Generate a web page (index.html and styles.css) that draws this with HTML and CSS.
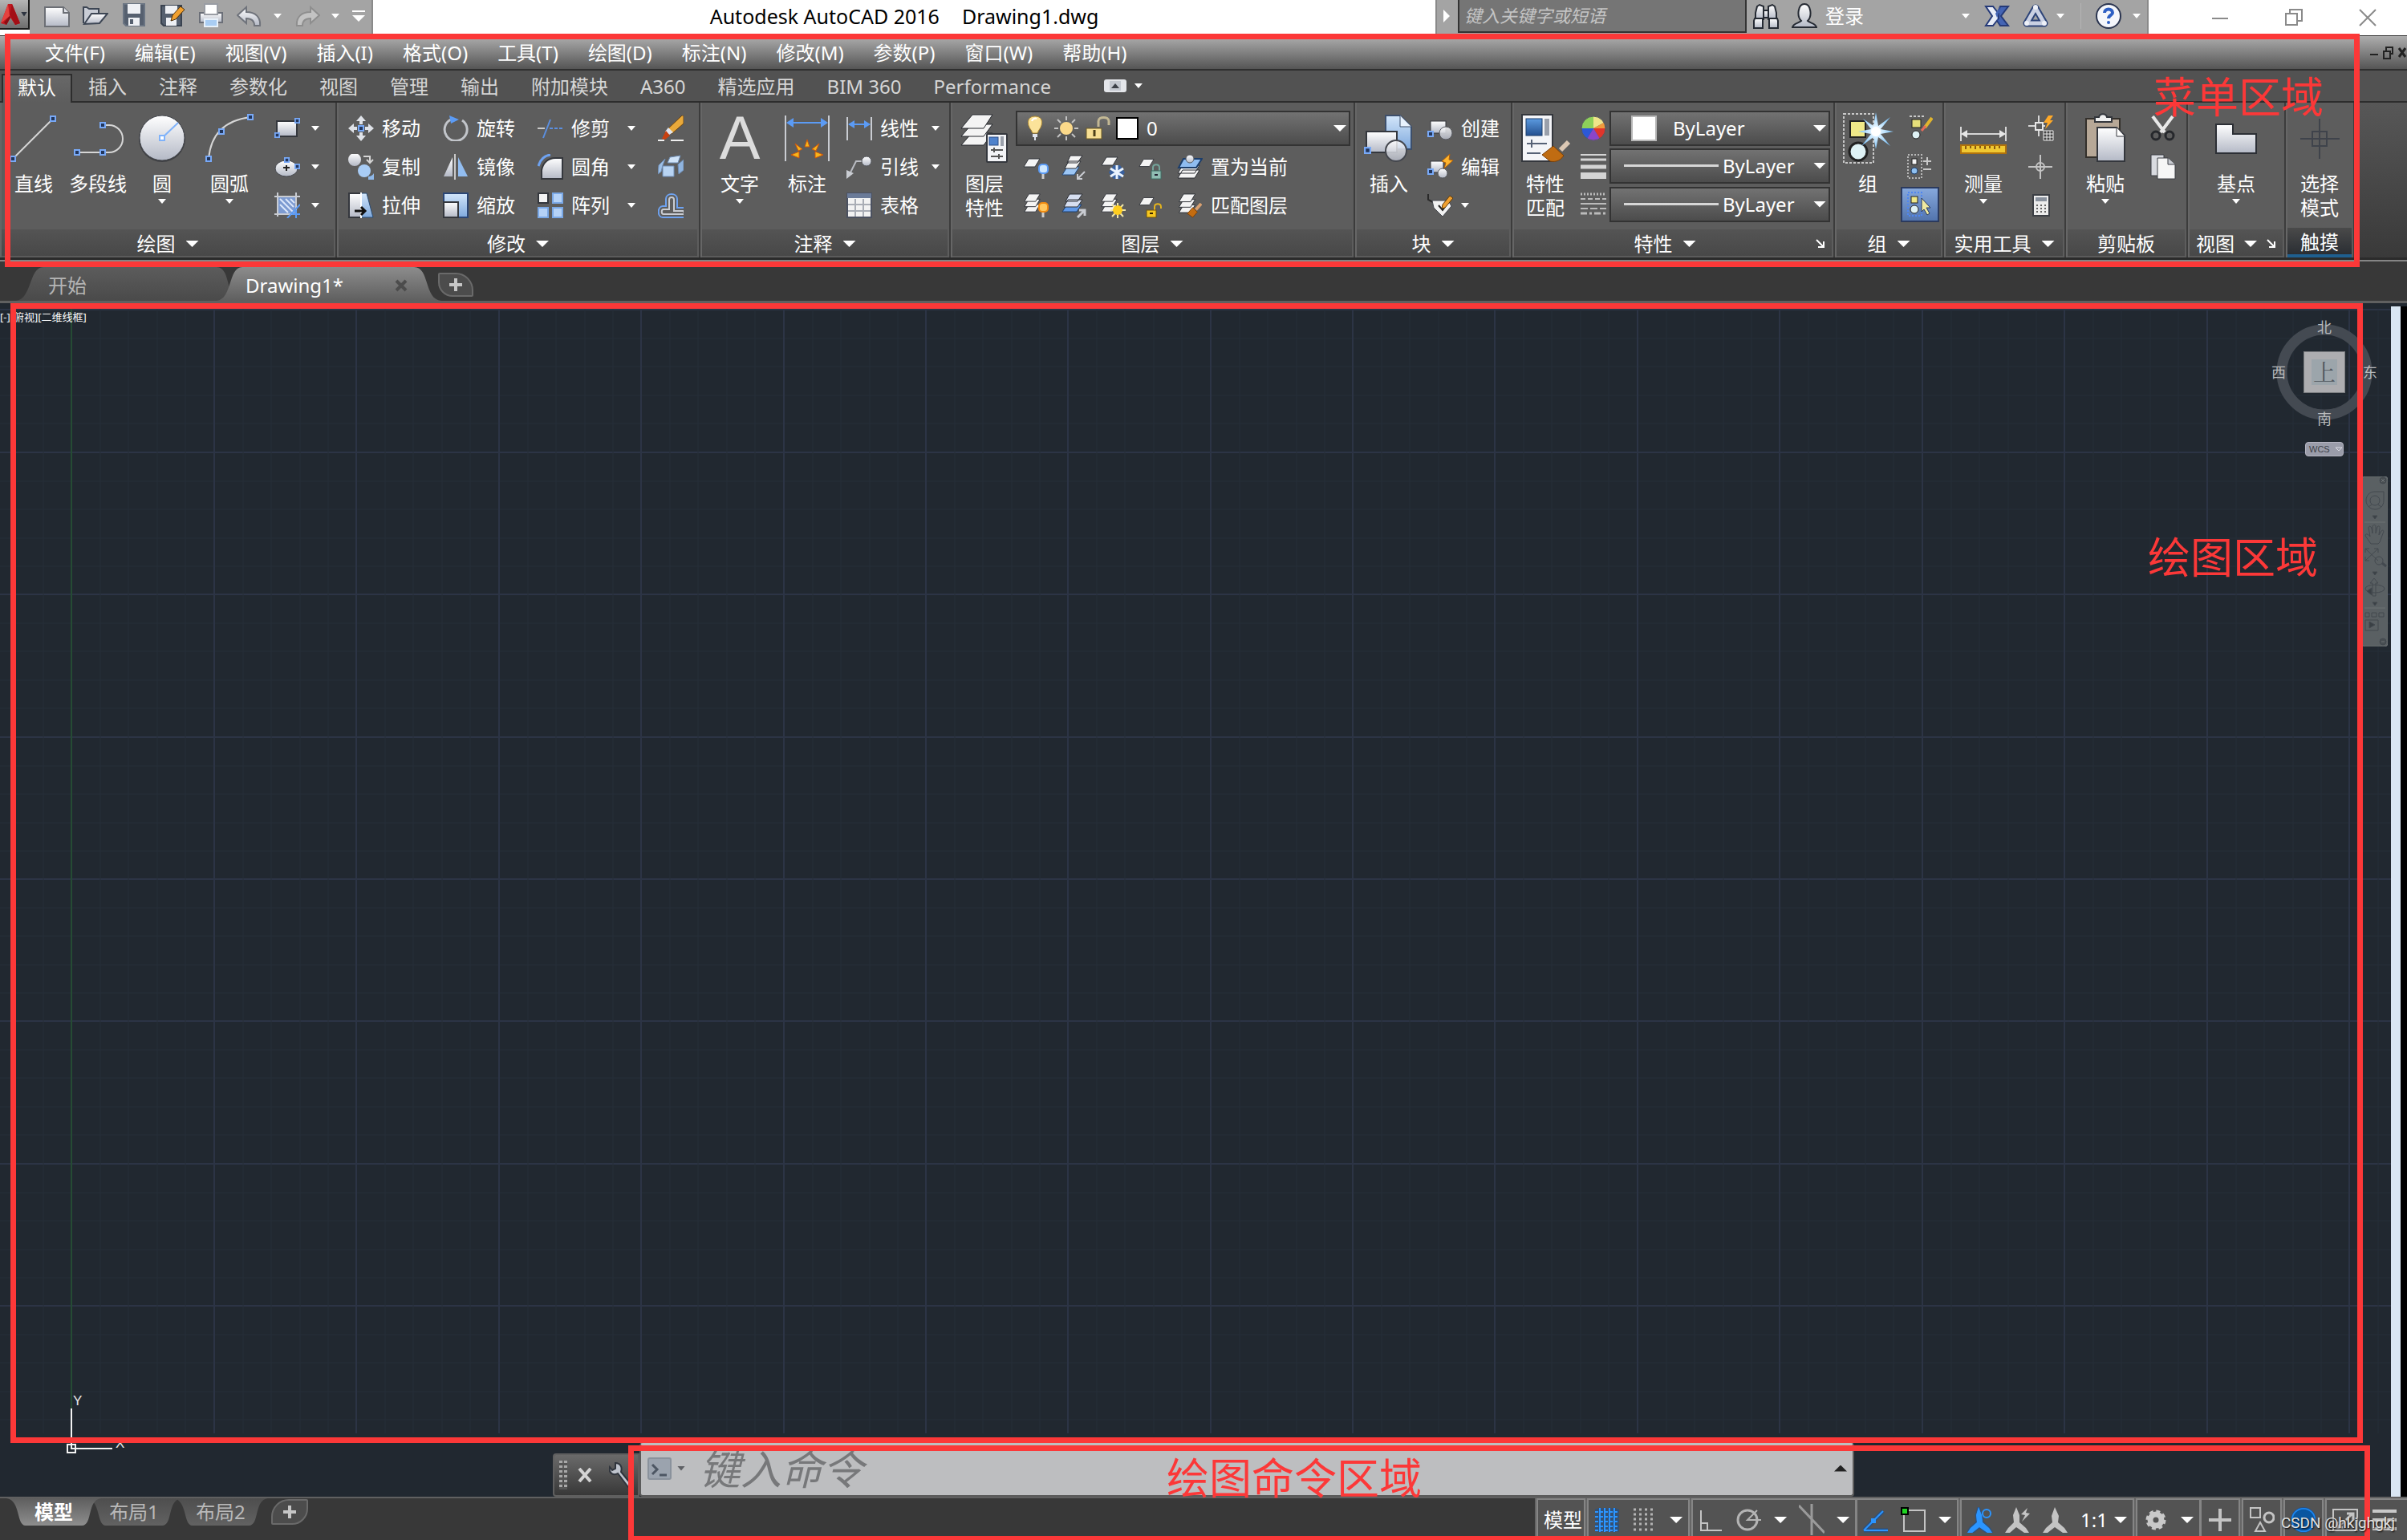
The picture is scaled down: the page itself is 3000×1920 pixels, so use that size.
FILE: index.html
```html
<!DOCTYPE html>
<html lang="zh-CN">
<head>
<meta charset="utf-8">
<meta name="viewport" content="width=device-width, initial-scale=1">
<title>Autodesk AutoCAD 2016 - Drawing1.dwg</title>
<link rel="stylesheet" href="styles.css">
</head>
<body>
<svg class="sprite" width="0" height="0" aria-hidden="true">
  <defs>
    <linearGradient id="gw" x1="0" y1="0" x2="0" y2="1"><stop offset="0" stop-color="#ffffff"/><stop offset="1" stop-color="#b4b9c6"/></linearGradient>
    <linearGradient id="gb" x1="0" y1="0" x2="0" y2="1"><stop offset="0" stop-color="#d3e6fa"/><stop offset="1" stop-color="#7fa9dd"/></linearGradient>
    <linearGradient id="gd" x1="0" y1="0" x2="0" y2="1"><stop offset="0" stop-color="#5b9ae0"/><stop offset="1" stop-color="#24508f"/></linearGradient>
    <radialGradient id="gs"><stop offset="0" stop-color="#ffffff"/><stop offset="0.4" stop-color="#cdeaff"/><stop offset="1" stop-color="#7cc0f5"/></radialGradient>
  </defs>
  <symbol id="s-node" viewBox="0 0 8 8"><rect x="1" y="1" width="6" height="6" fill="#22365c" stroke="#78a9f7" stroke-width="2"/></symbol>
  <symbol id="s-sheet" viewBox="0 0 22 12"><path d="M7 1H21L15 11H1Z" fill="#f4f4f4" stroke="#33363c" stroke-width="1"/></symbol>
  <symbol id="s-stack" viewBox="0 0 24 28"><path d="M7 16H22L16 26H1Z" fill="#f4f4f4" stroke="#2c2f35"/><path d="M7 9H22L16 19H1Z" fill="#f4f4f4" stroke="#2c2f35"/><path d="M7 2H22L16 12H1Z" fill="#f4f4f4" stroke="#2c2f35"/></symbol>
  <symbol id="s-brush" viewBox="0 0 20 20"><path d="M19 1L12 9" stroke="#d8a070" stroke-width="4"/><path d="M8 6L14 12L8 19L1 14Z" fill="#c46c10" stroke="#7a4008"/></symbol>

  <symbol id="new" viewBox="0 0 32 32"><path d="M1 5H24L31 12V29H1Z" fill="url(#gw)" stroke="#6c6f75" stroke-width="2"/><path d="M24 5V12H31" fill="#dfe2e8" stroke="#6c6f75" stroke-width="2"/></symbol>
  <symbol id="open" viewBox="0 0 32 32"><path d="M1 25V5H5L8 7H20V13" fill="#c9cdd6" stroke="#3d4654" stroke-width="2"/><path d="M2 26L11 13H31L21 25Z" fill="url(#gw)" stroke="#3d4654" stroke-width="2"/></symbol>
  <symbol id="save" viewBox="0 0 32 32"><path d="M3 1H29V28H6L3 25Z" fill="#56606f" stroke="#6a7482" stroke-width="2"/><path d="M8 1H24V13H8Z" fill="#eef0f4"/><path d="M9 18H23V28H9Z" fill="#eef0f4"/><path d="M11 20H15V26H11Z" fill="#56606f"/></symbol>
  <symbol id="saveas" viewBox="0 0 32 32"><path d="M2 3H27V28H5L2 25Z" fill="#56606f" stroke="#3a4350" stroke-width="2"/><path d="M7 3H22V13H7Z" fill="#eef0f4"/><path d="M8 18H21V28H8Z" fill="#eef0f4"/><path d="M26 4L31 8L20 20L14 22L16 15Z" fill="#f0a030" stroke="#4b2f0a" stroke-width="1"/></symbol>
  <symbol id="print" viewBox="0 0 32 32"><path d="M2 12H30V24H2Z" fill="url(#gw)" stroke="#6b6f78" stroke-width="2"/><path d="M8 1H24V14H8Z" fill="#fff" stroke="#9a9da4" stroke-width="2"/><path d="M8 20H24V29H8Z" fill="#a9cdf3" stroke="#e8f1fa" stroke-width="2"/></symbol>
  <symbol id="undo" viewBox="0 0 32 32"><path d="M1 15L12 5V11C23 11 30 17 29 28H22C22 22 19 19 12 19V25Z" fill="url(#gw)" stroke="#6f737b" stroke-width="2"/></symbol>
  <symbol id="redo" viewBox="0 0 32 32"><path d="M31 15L20 5V11C9 11 2 17 3 28H10C10 22 13 19 20 19V25Z" fill="#c3c3c3" stroke="#8e8e8e" stroke-width="2"/></symbol>
  <symbol id="applogo" viewBox="0 0 26 28"><path d="M10 1H15L25 25L19 27L13 18L8 27L1 25Z" fill="#c21820"/><path d="M10 1L12 16L1 25Z" fill="#e4423f"/><path d="M12 16L13 18L8 27L5 24Z" fill="#8a0d12"/><path d="M15 1L25 25L19 27L12 14Z" fill="#a30f16"/></symbol>
  <symbol id="binoc" viewBox="0 0 32 32"><g fill="url(#gw)" stroke="#252a33" stroke-width="2"><path d="M5 4L8 2L13 4V20H3V12Z"/><path d="M27 4L24 2L19 4V20H29V12Z"/><path d="M13 9H19V18H13Z"/><path d="M2 19H12V31H1V22Z"/><path d="M30 19H20V31H31V22Z"/></g></symbol>
  <symbol id="user" viewBox="0 0 32 32"><path d="M1 30C2 25 9 25 12 22C6 16 8 1 16 1S26 16 20 22C23 25 30 25 31 30Z" fill="url(#gw)" stroke="#252a33" stroke-width="2"/></symbol>
  <symbol id="xchg" viewBox="0 0 32 32"><path d="M20 4H30L21 16L30 28H20L15 20L17 11Z" fill="#4464b4" stroke="#253a78" stroke-width="2"/><path d="M2 4H11L18 13V19L11 28H2L10 16Z" fill="#e9edf7" stroke="#253a78" stroke-width="2"/><path d="M20 4L14 13L20 28L16 20Z" fill="#4464b4"/></symbol>
  <symbol id="a360" viewBox="0 0 32 32"><path d="M16 6L27 25H5Z" fill="none" stroke="#2d4478" stroke-width="9" stroke-linejoin="round"/><path d="M16 6L27 25H5Z" fill="none" stroke="#c9d0e2" stroke-width="5" stroke-linejoin="round"/><g fill="#eef1f8"><circle cx="16" cy="5" r="3"/><circle cx="5" cy="25" r="3"/><circle cx="27" cy="25" r="3"/></g></symbol>
  <symbol id="help" viewBox="0 0 32 32"><circle cx="16" cy="16" r="15" fill="#f4f6fb" stroke="#2b3550" stroke-width="2"/><path d="M11 12C11 6 21 6 21 12C21 15 16 15 16 19" fill="none" stroke="#2d5fc4" stroke-width="4"/><circle cx="16" cy="24" r="2" fill="#2d5fc4"/></symbol>
  <symbol id="w-min" viewBox="0 0 32 32"><path d="M6 17H26" stroke="#8a8a8a" stroke-width="2"/></symbol>
  <symbol id="w-restore" viewBox="0 0 32 32"><path d="M6 11H20V25H6ZM11 11V6H26V20H20" fill="none" stroke="#8a8a8a" stroke-width="2"/></symbol>
  <symbol id="w-close" viewBox="0 0 32 32"><path d="M6 6L26 26M26 6L6 26" stroke="#8a8a8a" stroke-width="2"/></symbol>
  <symbol id="panelbtn" viewBox="0 0 28 16"><rect width="28" height="16" rx="3" fill="#e4e6ea"/><rect x="7" y="2" width="14" height="12" fill="#c4c8d0"/><path d="M9 11L14 5L19 11Z" fill="#3c4048"/></symbol>

  <symbol id="line" viewBox="0 0 64 64"><path d="M6 58L56 8" stroke="#d6d6d6" stroke-width="2"/><use href="#s-node" x="2" y="54" width="8" height="8"/><use href="#s-node" x="52" y="4" width="8" height="8"/></symbol>
  <symbol id="pline" viewBox="0 0 64 64"><path d="M6 50H46A17 17 0 0 0 46 16H38" fill="none" stroke="#d6d6d6" stroke-width="2"/><use href="#s-node" x="2" y="46" width="8" height="8"/><use href="#s-node" x="34" y="46" width="8" height="8"/><use href="#s-node" x="34" y="12" width="8" height="8"/></symbol>
  <symbol id="circle" viewBox="0 0 64 64"><circle cx="32" cy="33" r="29" fill="#2b2d32" opacity="0.600"/><circle cx="32" cy="32" r="28" fill="url(#gw)" stroke="#44474e"/><path d="M32 32L52 13" stroke="#7fb2fa" stroke-width="2"/><rect x="29" y="29" width="6" height="6" fill="#fff" stroke="#7fb2fa" stroke-width="2"/></symbol>
  <symbol id="arc" viewBox="0 0 64 64"><path d="M6 58Q10 12 58 6" fill="none" stroke="#d6d6d6" stroke-width="2"/><use href="#s-node" x="2" y="54" width="8" height="8"/><use href="#s-node" x="18" y="20" width="8" height="8"/><use href="#s-node" x="54" y="2" width="8" height="8"/></symbol>
  <symbol id="rect" viewBox="0 0 32 32"><rect x="3" y="7" width="25" height="19" fill="url(#gw)" stroke="#34373d" stroke-width="2"/><use href="#s-node" x="25" y="3" width="7" height="7"/><use href="#s-node" x="0" y="21" width="7" height="7"/></symbol>
  <symbol id="ellipse" viewBox="0 0 32 32"><ellipse cx="15" cy="18" rx="14" ry="10" fill="url(#gw)" stroke="#44474e"/><path d="M15 14V21M11 17H19" stroke="#222" stroke-width="2"/><use href="#s-node" x="12" y="4" width="7" height="7"/><use href="#s-node" x="25" y="12" width="7" height="7"/></symbol>
  <symbol id="hatch" viewBox="0 0 32 32"><rect x="5" y="6" width="21" height="20" fill="#7d9bd1"/><path d="M7 8L24 25M7 15L17 25M14 8L24 18M20 8L25 13" stroke="#dce8fb" stroke-width="2"/><path d="M4 0V30M27 0V24M0 5H32M0 27H22" stroke="#c9ccd2" stroke-width="2"/><path d="M32 15L16 32M22 27H32M27 22V32" stroke="#5b9bf5" stroke-width="2"/></symbol>
  <symbol id="move" viewBox="0 0 32 32"><g fill="#dfe2e8"><path d="M16 0L22 7H18V11H14V7H10Z"/><path d="M16 32L22 25H18V21H14V25H10Z"/><path d="M0 16L7 10V14H11V18H7V22Z"/><path d="M32 16L25 10V14H21V18H25V22Z"/></g><use href="#s-node" x="12" y="12" width="8" height="8"/></symbol>
  <symbol id="rotate" viewBox="0 0 32 32"><path d="M10 5A14 14 0 1 0 24 6" fill="none" stroke="#c2c5ca" stroke-width="3"/><path d="M8 0L20 5L10 10Z" fill="#5b9bf5"/></symbol>
  <symbol id="trim" viewBox="0 0 32 32"><path d="M0 16H9" stroke="#c9c9c9" stroke-width="2"/><path d="M16 5L7 28" stroke="#5b8fe0" stroke-width="2"/><path d="M15 16H32" stroke="#5b8fe0" stroke-width="2" stroke-dasharray="4 2"/></symbol>
  <symbol id="erase" viewBox="0 0 32 32"><path d="M0 31H8M16 31H32" stroke="#f0f0f0" stroke-width="2"/><path d="M30 0H32V10L17 23L11 18Z" fill="#e9a93a" stroke="#6b430f"/><path d="M13 15L19 21L14 24L9 20Z" fill="#dfe4ee"/><path d="M10 19L15 25L9 30L5 29Z" fill="#c8400f"/></symbol>
  <symbol id="copy" viewBox="0 0 32 32"><circle cx="8" cy="7" r="8" fill="url(#gw)"/><path d="M25 28A9 9 0 0 0 32 24V32H25Z" fill="#8fb9ea"/><circle cx="20" cy="21" r="8" fill="#a8ccf5"/><path d="M19 3H27V10M23 7L27 11L31 7" fill="none" stroke="#d5d5d5" stroke-width="2"/></symbol>
  <symbol id="mirror" viewBox="0 0 32 32"><path d="M12 4V28H1Z" fill="url(#gw)"/><path d="M19 4V28H31Z" fill="#92bdf0"/><path d="M15 0V32" stroke="#c9c9c9" stroke-width="2"/></symbol>
  <symbol id="fillet" viewBox="0 0 32 32"><path d="M5 31V20C7 10 14 5 22 5H31V31Z" fill="url(#gw)" stroke="#34373d" stroke-width="2"/><path d="M1 15C3 8 8 2 16 1" fill="none" stroke="#6ea2f0" stroke-width="3"/></symbol>
  <symbol id="explode" viewBox="0 0 32 32"><g stroke="#6e8db5"><path d="M15 4L28 2L25 11H12Z" fill="#cfe3f8"/><path d="M6 15H20V28H6Z" fill="#b8d4f3"/><path d="M25 13L32 7V20L26 25Z" fill="#8fb4df"/><path d="M1 14L9 6L6 14L4 22L0 25Z" fill="#9dbfe6"/></g></symbol>
  <symbol id="stretch" viewBox="0 0 32 32"><path d="M16 1H23L31 31H16Z" fill="url(#gb)" stroke="#274a72"/><path d="M1 1H16V31H1Z" fill="url(#gw)" stroke="#34373d" stroke-width="2"/><path d="M16 0V32" stroke="#fff" stroke-width="2"/><path d="M8 23H20M16 18L21 23L16 28" fill="none" stroke="#101010" stroke-width="3"/></symbol>
  <symbol id="scale" viewBox="0 0 32 32"><rect x="1" y="1" width="30" height="30" fill="url(#gb)" stroke="#2b4675" stroke-width="2"/><path d="M1 12H19V31H1Z" fill="url(#gw)" stroke="#34373d" stroke-width="2"/></symbol>
  <symbol id="array" viewBox="0 0 32 32"><rect x="1" y="1" width="12" height="12" fill="#f4f4f4" stroke="#34373d" stroke-width="2"/><g fill="#b5d2f7" stroke="#7aa8e6" stroke-width="2"><rect x="19" y="1" width="12" height="12"/><rect x="1" y="19" width="12" height="12"/><rect x="19" y="19" width="12" height="12"/></g></symbol>
  <symbol id="offset" viewBox="0 0 32 32"><path d="M32 19H24V8C24 0 10 0 10 8V17H6C-1 17-1 31 6 31H32" fill="none" stroke="#6ea2f0" stroke-width="2"/><path d="M32 25V23H20V9C20 5 14 5 14 9V21H7C4 21 4 27 7 27H32" fill="none" stroke="#c9ccd2" stroke-width="2"/></symbol>
  <symbol id="dim" viewBox="0 0 64 64"><path d="M5 4V61M59 4V61" stroke="#c9ccd2" stroke-width="2"/><path d="M8 13H56" stroke="#5b9bf5" stroke-width="2"/><path d="M6 13L15 7V19ZM58 13L49 7V19Z" fill="#5b9bf5"/><g fill="#f7b51a" stroke="#d0560b"><path d="M32 34L35 43H29ZM17 39L26 46L21 48ZM47 39L38 46L43 48ZM12 53L22 49V57ZM52 53L42 49V57Z"/></g></symbol>
  <symbol id="lindim" viewBox="0 0 32 32"><path d="M1 2V31M31 2V31" stroke="#c9ccd2" stroke-width="2"/><path d="M3 11H29" stroke="#5b9bf5" stroke-width="2"/><path d="M2 11L10 6V16ZM30 11L22 6V16Z" fill="#5b9bf5"/></symbol>
  <symbol id="leader" viewBox="0 0 32 32"><path d="M22 9H12L3 27" fill="none" stroke="#b9bcc2" stroke-width="2"/><path d="M0 31V20L9 24Z" fill="#c9ccd2"/><circle cx="25" cy="9" r="6" fill="url(#gw)" stroke="#55585e"/></symbol>
  <symbol id="table" viewBox="0 0 32 32"><rect x="1" y="1" width="30" height="30" fill="#f2f2f2" stroke="#4b5160" stroke-width="2"/><path d="M1 1H31V7H1Z" fill="#6b7b98"/><path d="M2 15H30M2 23H30M11 8V30M21 8V30" stroke="#a9adb5" stroke-width="2"/></symbol>
  <symbol id="layerprop" viewBox="0 0 64 64"><g fill="#f4f4f4" stroke="#24272c" stroke-width="1"><path d="M16 26H42L31 41H3Z"/><path d="M16 15H42L31 30H3Z"/><path d="M17 3H42L31 20H3Z"/></g><rect x="35" y="27" width="25" height="35" rx="1" fill="#f2f3f6" stroke="#34373d" stroke-width="2"/><rect x="38" y="31" width="11" height="10" fill="#4f82cc" stroke="#2a4d85"/><path d="M54 30V42" stroke="#9aa0ab" stroke-width="4"/><path d="M40 47H55M40 55H55M44 44V50M50 52V58" stroke="#555" stroke-width="2"/></symbol>
  <symbol id="bulb" viewBox="0 0 32 32"><path d="M16 1C5 1 6 12 11 18L13 22H19L21 18C26 12 27 1 16 1Z" fill="#fbe39a" stroke="#a98430"/><path d="M12 7C13 4 16 3 18 4" fill="none" stroke="#fff" stroke-width="2"/><path d="M13 23H19V27H13ZM15 27H17V31H15Z" fill="#dfe4ee"/></symbol>
  <symbol id="sun" viewBox="0 0 32 32"><path d="M16 1V6M16 26V31M1 16H6M26 16H31M5 5L9 9M23 23L27 27M27 5L23 9M9 23L5 27" stroke="#c4c4c4" stroke-width="2"/><circle cx="16" cy="16" r="8" fill="#fbd98a"/></symbol>
  <symbol id="unlock" viewBox="0 0 32 32"><path d="M17 14V7C17 1 30 1 30 7V12" fill="none" stroke="#c3b894" stroke-width="3"/><rect x="2" y="16" width="19" height="13" fill="#f7df93" stroke="#6d5b25"/><path d="M12 18V26" stroke="#4d4018" stroke-width="3"/></symbol>
  <symbol id="l-off" viewBox="0 0 32 32"><use href="#s-sheet" x="0" y="5" width="22" height="12"/><path d="M25 23V31" stroke="#cfcfcf" stroke-width="3"/><rect x="20" y="13" width="11" height="11" rx="4" fill="#cfe8ff" stroke="#5b9bf5" stroke-width="2"/></symbol>
  <symbol id="l-iso" viewBox="0 0 32 32"><path d="M7 16H22L16 26H1Z" fill="#9cc6f5" stroke="#244a7c"/><path d="M9 9H24L18 18H4ZM11 2H26L20 11H7Z" fill="#f4f4f4" stroke="#2c2f35"/><path d="M29 22L20 31M20 25V31H26" fill="none" stroke="#c9ccd2" stroke-width="2"/></symbol>
  <symbol id="l-freeze" viewBox="0 0 32 32"><use href="#s-sheet" x="1" y="3" width="22" height="12"/><path d="M17 14H25L31 23L25 31H17L11 23Z" fill="#38609f"/><path d="M21 14V31M13 18L29 28M29 18L13 28" stroke="#eaf4ff" stroke-width="3"/></symbol>
  <symbol id="l-lock" viewBox="0 0 32 32"><use href="#s-sheet" x="0" y="5" width="20" height="12"/><path d="M18 22V17C18 12 26 12 26 17V22" fill="none" stroke="#74a59b" stroke-width="2"/><rect x="16" y="21" width="12" height="10" fill="#8fbdb3" stroke="#3f6f65"/><path d="M20 26H24" stroke="#223" stroke-width="2"/></symbol>
  <symbol id="l-current" viewBox="0 0 32 32"><path d="M7 20H28L22 30H1ZM7 14H28L22 24H1Z" fill="#f4f4f4" stroke="#2c2f35"/><path d="M8 6H31L24 17H2Z" fill="#8fbcf0" stroke="#1d3e6b" stroke-width="2"/><circle cx="16" cy="6" r="5" fill="url(#gw)" stroke="#55585e"/></symbol>
  <symbol id="l-on" viewBox="0 0 32 32"><use href="#s-stack" x="0" y="0" width="24" height="26"/><path d="M25 23V31" stroke="#cfcfcf" stroke-width="3"/><rect x="20" y="13" width="11" height="11" rx="4" fill="#ffc860" stroke="#f08a10" stroke-width="2"/></symbol>
  <symbol id="l-uniso" viewBox="0 0 32 32"><path d="M7 15H25L19 24H1Z" fill="#5f98e8" stroke="#1d3e6b"/><path d="M8 9H26L20 18H3ZM10 2H26L20 11H5Z" fill="#d6def0" stroke="#2c2f35"/><path d="M20 31L28 23M22 22H29V29" fill="none" stroke="#c9ccd2" stroke-width="3"/></symbol>
  <symbol id="l-thaw" viewBox="0 0 32 32"><use href="#s-stack" x="0" y="0" width="24" height="26"/><path d="M22 13V32M13 22H32M15 15L29 30M29 15L15 30" stroke="#f3e7a8" stroke-width="2"/><circle cx="22" cy="22" r="6" fill="#ffce1f"/></symbol>
  <symbol id="l-unlock" viewBox="0 0 32 32"><use href="#s-sheet" x="0" y="5" width="20" height="12"/><path d="M20 22V18C20 13 28 13 28 18V20" fill="none" stroke="#e5b41d" stroke-width="2"/><rect x="10" y="22" width="12" height="9" fill="#f7c71f" stroke="#6d5210"/><path d="M14 26H18" stroke="#332200" stroke-width="2"/></symbol>
  <symbol id="l-match" viewBox="0 0 32 32"><use href="#s-stack" x="0" y="0" width="26" height="27"/><use href="#s-brush" x="12" y="13" width="19" height="19"/></symbol>
  <symbol id="insert" viewBox="0 0 64 64"><path d="M28 4H46L60 18V46H28Z" fill="url(#gb)" stroke="#3d4f6b" stroke-width="2"/><path d="M46 4V18H60" fill="#e8f2fd" stroke="#3d4f6b"/><rect x="4" y="24" width="38" height="26" fill="url(#gw)" stroke="#34373d" stroke-width="2"/><circle cx="41" cy="48" r="13" fill="url(#gw)" fill-opacity="0.850" stroke="#44474e" stroke-width="2"/><use href="#s-node" x="1" y="43" width="9" height="9"/></symbol>
  <symbol id="create" viewBox="0 0 32 32"><rect x="4" y="7" width="19" height="15" fill="url(#gw)" stroke="#34373d"/><circle cx="23" cy="22" r="8" fill="url(#gw)" fill-opacity="0.850" stroke="#55585e"/><use href="#s-node" x="0" y="19" width="8" height="8"/></symbol>
  <symbol id="bedit" viewBox="0 0 32 32"><rect x="4" y="9" width="16" height="14" fill="url(#gw)" stroke="#34373d"/><circle cx="19" cy="24" r="6" fill="url(#gw)" stroke="#55585e"/><use href="#s-node" x="0" y="18" width="8" height="8"/><path d="M28 0L18 9L23 11L21 18L32 8L27 7Z" fill="#ffb52e" stroke="#b05f08"/></symbol>
  <symbol id="attr" viewBox="0 0 32 32"><path d="M1 2V9L7 12" fill="none" stroke="#2a2a2a" stroke-width="2"/><path d="M6 10H26L30 17L19 30L8 19Z" fill="#f2f2f2" stroke="#44474e"/><path d="M14 16L19 22L22 18" fill="none" stroke="#222" stroke-width="2"/><path d="M28 4L32 7L22 19L18 20L19 15Z" fill="#f0a030" stroke="#5b3808"/></symbol>
  <symbol id="matchprop" viewBox="0 0 64 64"><rect x="3" y="3" width="38" height="58" fill="#f4f5f8" stroke="#34373d" stroke-width="2"/><rect x="8" y="8" width="20" height="21" fill="url(#gd)" stroke="#1d3e6b"/><path d="M34 8V29" stroke="#9aa0ab" stroke-width="6"/><path d="M9 39H34M9 51H26M15 34V44" stroke="#566276" stroke-width="2"/><path d="M61 37L51 47" stroke="#dcc8b4" stroke-width="6"/><path d="M42 42L55 54C50 62 42 62 38 61L28 53Z" fill="#c06c12" stroke="#7a4008"/></symbol>
  <symbol id="wheel" viewBox="0 0 32 32"><path d="M16 16V1A15 15 0 0 1 29 9Z" fill="#efe48a"/><path d="M16 16L29 9A15 15 0 0 1 31 16Z" fill="#f09a3c"/><path d="M16 16H31A15 15 0 0 1 24 29Z" fill="#e0352b"/><path d="M16 16L24 29A15 15 0 0 1 8 29Z" fill="#8b45c8"/><path d="M16 16L8 29A15 15 0 0 1 1 16Z" fill="#2c58d8"/><path d="M16 16H1A15 15 0 0 1 16 1Z" fill="#8ed05a"/><circle cx="16" cy="16" r="15" fill="none" stroke="#55585e"/></symbol>
  <symbol id="lweight" viewBox="0 0 32 32"><path d="M0 1H32" stroke="#d4d4d4" stroke-width="2"/><path d="M0 7H32" stroke="#d4d4d4" stroke-width="3"/><path d="M0 16H32" stroke="#d4d4d4" stroke-width="5"/><path d="M0 27H32" stroke="#d4d4d4" stroke-width="8"/></symbol>
  <symbol id="ltype" viewBox="0 0 32 32"><path d="M0 2H32" stroke="#bbb" stroke-width="3" stroke-dasharray="2 2"/><path d="M0 8H32" stroke="#bbb" stroke-width="2" stroke-dasharray="6 3"/><path d="M0 14H32" stroke="#bbb" stroke-width="2"/><path d="M0 20H32" stroke="#bbb" stroke-width="2" stroke-dasharray="9 3"/><path d="M0 26H32" stroke="#bbb" stroke-width="3" stroke-dasharray="8 3 3 3"/></symbol>
  <symbol id="group" viewBox="0 0 64 64"><rect x="2" y="2" width="37" height="61" fill="none" stroke="#c9c9c9" stroke-width="2" stroke-dasharray="3 2"/><rect x="10" y="11" width="19" height="20" fill="#efe888" stroke="#222" stroke-width="2"/><circle cx="20" cy="49" r="11" fill="#dff2f5" stroke="#222" stroke-width="3"/><path d="M42 0L45 17L60 6L48 21L64 24L48 27L60 42L45 31L42 46L39 31L24 42L36 27L20 24L36 21L26 8L39 17Z" fill="url(#gs)"/><circle cx="42" cy="24" r="6" fill="#fff"/></symbol>
  <symbol id="groupedit" viewBox="0 0 32 32"><path d="M3 1H22" stroke="#c9c9c9" stroke-width="2" stroke-dasharray="3 2"/><rect x="6" y="5" width="11" height="10" fill="#e6df7a" stroke="#222"/><circle cx="11" cy="24" r="5" fill="#dff2f5" stroke="#222"/><path d="M31 3L22 15" stroke="#e0b52e" stroke-width="4"/><path d="M23 13L18 19" stroke="#e46a5b" stroke-width="3"/></symbol>
  <symbol id="grouppm" viewBox="0 0 32 32"><rect x="1" y="1" width="17" height="29" fill="none" stroke="#b9b9b9" stroke-width="2" stroke-dasharray="2 2"/><rect x="6" y="6" width="6" height="7" fill="#f4f4f4" stroke="#222"/><circle cx="9" cy="21" r="4" fill="#8fc0f0" stroke="#1d3e6b"/><path d="M20 9H30M25 4V14M20 19H30" stroke="#c9c9c9" stroke-width="2"/></symbol>
  <symbol id="groupsel" viewBox="0 0 32 32"><rect x="1" y="1" width="17" height="29" fill="none" stroke="#4f86f0" stroke-width="2" stroke-dasharray="2 2"/><rect x="5" y="6" width="8" height="8" fill="#efe888" stroke="#222"/><circle cx="9" cy="22" r="5" fill="#dff2f5" stroke="#222"/><path d="M18 8L29 20L24 20L28 27L25 29L21 22L18 25Z" fill="#efe9a0" stroke="#2a3a5c"/></symbol>
  <symbol id="measure" viewBox="0 0 64 64"><path d="M4 18V36M60 18V36M5 27H59" stroke="#d6d6d6" stroke-width="2"/><path d="M4 27L12 22V32ZM60 27L52 22V32Z" fill="#e6e6e6"/><rect x="4" y="41" width="56" height="10" fill="#f0c832" stroke="#b0720c" stroke-width="2"/><path d="M10 42V46M16 42V45M22 42V46M28 42V45M34 42V46M40 42V45M46 42V46M52 42V45" stroke="#8a5a10" stroke-width="2"/></symbol>
  <symbol id="qcalc" viewBox="0 0 32 32"><path d="M13 0V8M13 18V26M0 13H8M18 13H21" stroke="#d6d6d6" stroke-width="2"/><rect x="9" y="9" width="9" height="9" fill="none" stroke="#e6e6e6" stroke-width="2"/><path d="M25 0L19 9H24L21 17L31 6H27L31 0Z" fill="#ffa928"/><path d="M19 19H31V31H19ZM19 23H31M19 27H31M23 19V31M27 19V31" fill="#444" stroke="#eee" stroke-width="1"/></symbol>
  <symbol id="idpoint" viewBox="0 0 32 32"><path d="M15 1V31M0 16H30" stroke="#c4c4c4" stroke-width="2"/><circle cx="15" cy="16" r="5" fill="none" stroke="#c4c4c4" stroke-width="2"/></symbol>
  <symbol id="calc" viewBox="0 0 32 32"><rect x="6" y="3" width="20" height="26" fill="#ececec" stroke="#3c3f45" stroke-width="2"/><rect x="9" y="6" width="14" height="5" fill="#8a929e"/><path d="M10 16H24M10 20H24M10 24H24" stroke="#666" stroke-width="2" stroke-dasharray="2 3"/></symbol>
  <symbol id="paste" viewBox="0 0 64 64"><rect x="8" y="8" width="42" height="48" fill="#b7a897" stroke="#34302b" stroke-width="2"/><path d="M19 12V6H24C25 1 33 1 34 6H40V12Z" fill="#f0f0f0" stroke="#34373d" stroke-width="2"/><path d="M22 19H46L56 29V61H22Z" fill="url(#gw)" stroke="#34373d" stroke-width="2"/><path d="M46 19V30H56" fill="#fff" stroke="#34373d"/></symbol>
  <symbol id="cut" viewBox="0 0 32 32"><path d="M3 1L18 21M28 1L13 21" stroke="#e8e8e8" stroke-width="4"/><circle cx="7" cy="25" r="5" fill="none" stroke="#26282c" stroke-width="3"/><circle cx="24" cy="25" r="5" fill="none" stroke="#26282c" stroke-width="3"/></symbol>
  <symbol id="copyclip" viewBox="0 0 32 32"><path d="M1 1H17V27H1Z" fill="#d9dbe0" stroke="#3c3f45"/><path d="M9 5H22L31 13V31H9Z" fill="#f6f6f6" stroke="#3c3f45"/><path d="M22 5V13H31" fill="#c9ccd2" stroke="#3c3f45"/></symbol>
  <symbol id="base" viewBox="0 0 64 64"><path d="M7 15H28V27H57V51H7Z" fill="url(#gw)" stroke="#2c2f35" stroke-width="2"/></symbol>
  <symbol id="touch" viewBox="0 0 64 64"><path d="M32 8V58M8 33H57" stroke="#3f434b" stroke-width="2"/><rect x="23" y="24" width="18" height="18" fill="none" stroke="#3f434b" stroke-width="2"/></symbol>
  <symbol id="launch" viewBox="0 0 12 12"><path d="M1 1L9 9M10 3V10H3" fill="none" stroke="#fff" stroke-width="2"/></symbol>

  <symbol id="grid" viewBox="0 0 32 32"><path d="M7 1V31M13 1V31M19 1V31M25 1V31M1 5H31M1 11H31M1 17H31M1 23H31M1 28H31" stroke="#0f4f9e" stroke-width="5" opacity="0.500"/><path d="M7 1V31M13 1V31M19 1V31M25 1V31" stroke="#2b95ff" stroke-width="2"/><path d="M1 6H31M1 12H31M1 18H31M1 24H31M1 29H31" stroke="#2b95ff" stroke-width="2" stroke-dasharray="4 2"/></symbol>
  <symbol id="snap" viewBox="0 0 32 32"><path d="M2 3H30M2 9H30M2 15H30M2 21H30M2 28H30" stroke="#b4b4b4" stroke-width="3" stroke-dasharray="3 4"/></symbol>
  <symbol id="ortho" viewBox="0 0 32 32"><path d="M3 4V29H29M3 20H11V29" fill="none" stroke="#c4c4c4" stroke-width="2"/></symbol>
  <symbol id="polar" viewBox="0 0 32 32"><circle cx="14" cy="16" r="12" fill="none" stroke="#b4b4b4" stroke-width="3"/><path d="M26 4L14 16H31" fill="none" stroke="#b4b4b4" stroke-width="2"/></symbol>
  <symbol id="iso" viewBox="0 0 32 40"><path d="M0 2L32 36M16 0V39" stroke="#9a9a9a" stroke-width="3"/></symbol>
  <symbol id="track" viewBox="0 0 32 32"><path d="M1 29H31M1 29L25 5" stroke="#0f4f9e" stroke-width="5" opacity="0.600"/><path d="M1 29H31M1 29L25 5" stroke="#2b95ff" stroke-width="2"/><rect x="10" y="14" width="6" height="6" fill="#2b95ff"/></symbol>
  <symbol id="osnap" viewBox="0 0 32 32"><rect x="4" y="4" width="26" height="26" fill="none" stroke="#c4c4c4" stroke-width="2"/><rect x="1" y="1" width="8" height="8" fill="#1ed321" stroke="#000" stroke-width="2"/></symbol>
  <symbol id="anno" viewBox="0 0 32 32"><path d="M15 0L20 11L19 19L27 26L31 32H25L15 25L6 32H0L4 26L12 19L11 11Z" fill="#c4c4c4"/></symbol>
  <symbol id="annov" viewBox="0 0 32 32"><path d="M14 0L18 10L19 19L27 26L31 32H25L15 25L6 32H0L4 26L12 19L11 10Z" fill="#2b95ff" stroke="#0f4f9e" stroke-opacity="0.500" stroke-width="3"/><path d="M14 0L18 10L19 19L27 26L31 32H25L15 25L6 32H0L4 26L12 19L11 10Z" fill="#2b95ff"/><circle cx="24" cy="8" r="5" fill="#535353" stroke="#2b95ff" stroke-width="2"/></symbol>
  <symbol id="annoa" viewBox="0 0 32 32"><path d="M14 0L18 10L18 19L26 26L30 32H24L14 25L6 32H0L4 26L11 19L10 10Z" fill="#c4c4c4"/><path d="M28 1L20 9L25 10L21 18L31 8L26 7Z" fill="#c4c4c4"/></symbol>
  <symbol id="gear" viewBox="0 0 32 32"><circle cx="16" cy="16" r="7" fill="none" stroke="#c9c9c9" stroke-width="7"/><circle cx="16" cy="16" r="11" fill="none" stroke="#c9c9c9" stroke-width="3" stroke-dasharray="5 3.640"/></symbol>
  <symbol id="plus" viewBox="0 0 32 32"><path d="M16 2V30M2 16H30" stroke="#c4c4c4" stroke-width="4"/></symbol>
  <symbol id="shapes" viewBox="0 0 32 32"><rect x="2" y="1" width="12" height="12" fill="none" stroke="#c4c4c4" stroke-width="2"/><circle cx="25" cy="13" r="6" fill="none" stroke="#c4c4c4" stroke-width="3"/><path d="M14 19L20 30H8Z" fill="none" stroke="#c4c4c4" stroke-width="2"/></symbol>
  <symbol id="hw" viewBox="0 0 36 36"><circle cx="18" cy="18" r="18" fill="#0f4f9e" opacity="0.600"/><circle cx="18" cy="18" r="16" fill="#0a56a0" stroke="#1b86f0" stroke-width="2"/></symbol>
  <symbol id="full" viewBox="0 0 32 32"><rect x="1" y="3" width="30" height="26" fill="none" stroke="#c4c4c4" stroke-width="2"/><path d="M17 16L25 8M18 8H26V16M14 18L7 25M6 18V25H13" fill="none" stroke="#c4c4c4" stroke-width="3"/></symbol>
  <symbol id="menu" viewBox="0 0 32 32"><path d="M1 5H31M1 16H31M1 27H31" stroke="#c9c9c9" stroke-width="4"/></symbol>
  <symbol id="prompt" viewBox="0 0 30 28"><rect x="1" y="1" width="28" height="26" rx="2" fill="#9ba3ae" stroke="#8a929c" stroke-width="2"/><path d="M6 9L12 15L6 21M15 22H24" fill="none" stroke="#4d5663" stroke-width="3"/></symbol>
  <symbol id="wrench" viewBox="0 0 28 32"><path d="M8 1L8 8L4 10L1 6C-1 14 6 17 11 14L24 31L28 28L15 12C17 6 14 1 8 1Z" fill="#bfc4cd" stroke="#2f343c" stroke-width="2"/></symbol>
</svg>

<div class="app">
  <header class="titlebar">
    <button class="appbtn" aria-label="应用程序菜单"><svg width="26" height="28"><use href="#applogo"/></svg><span class="caret dark"></span></button>
    <div class="qat">
      <button aria-label="新建"><svg class="i32"><use href="#new"/></svg></button>
      <button aria-label="打开"><svg class="i32"><use href="#open"/></svg></button>
      <button aria-label="保存"><svg class="i32"><use href="#save"/></svg></button>
      <button aria-label="另存为"><svg class="i32"><use href="#saveas"/></svg></button>
      <button aria-label="打印"><svg class="i32"><use href="#print"/></svg></button>
      <button class="split" aria-label="放弃"><svg class="i32"><use href="#undo"/></svg><span class="caret"></span></button>
      <button class="split" aria-label="重做"><svg class="i32"><use href="#redo"/></svg><span class="caret"></span></button>
      <button class="customize" aria-label="自定义"><span class="bar"></span><span class="caret lg"></span></button>
    </div>
    <h1 class="title"><span>Autodesk AutoCAD 2016</span><span>Drawing1.dwg</span></h1>
    <div class="infocenter">
      <span class="tri-right"></span>
      <input class="search" type="text" placeholder="键入关键字或短语" aria-label="搜索">
      <button aria-label="查找"><svg class="i32"><use href="#binoc"/></svg></button>
      <button class="login"><svg class="i32"><use href="#user"/></svg><span>登录</span><span class="caret"></span></button>
      <button aria-label="Exchange"><svg class="i32"><use href="#xchg"/></svg></button>
      <button class="pair" aria-label="A360"><svg class="i32"><use href="#a360"/></svg><span class="caret"></span></button>
      <button class="pair helpbtn" aria-label="帮助"><svg class="i32"><use href="#help"/></svg><span class="caret"></span></button>
    </div>
    <div class="winctl">
      <button aria-label="最小化"><svg class="i32"><use href="#w-min"/></svg></button>
      <button aria-label="还原"><svg class="i32"><use href="#w-restore"/></svg></button>
      <button aria-label="关闭"><svg class="i32"><use href="#w-close"/></svg></button>
    </div>
  </header>

  <nav class="menubar">
    <button>文件(F)</button><button>编辑(E)</button><button>视图(V)</button><button>插入(I)</button><button>格式(O)</button><button>工具(T)</button><button>绘图(D)</button><button>标注(N)</button><button>修改(M)</button><button>参数(P)</button><button>窗口(W)</button><button>帮助(H)</button>
    <span class="docctl"><svg width="46" height="16" viewBox="0 0 46 16"><path d="M0 10H10" stroke="#222" stroke-width="2"/><path d="M17 6H25V15H17ZM20 6V1H28V9H25" fill="none" stroke="#222" stroke-width="2"/><path d="M36 2L44 13M44 2L36 13" stroke="#222" stroke-width="3"/></svg></span>
  </nav>

  <div class="tabs">
    <button class="on">默认</button><button>插入</button><button>注释</button><button>参数化</button><button>视图</button><button>管理</button><button>输出</button><button>附加模块</button><button>A360</button><button>精选应用</button><button>BIM 360</button><button>Performance</button>
    <button class="minimize" aria-label="最小化功能区"><svg width="28" height="16"><use href="#panelbtn"/></svg><span class="caret"></span></button>
  </div>

  <div class="ribbon">
    <section class="panel p-draw">
      <div class="body">
        <button class="big"><svg class="i64"><use href="#line"/></svg><span>直线</span></button>
        <button class="big"><svg class="i64"><use href="#pline"/></svg><span>多段线</span></button>
        <button class="big"><svg class="i64"><use href="#circle"/></svg><span>圆</span><span class="caret"></span></button>
        <button class="big"><svg class="i64"><use href="#arc"/></svg><span>圆弧</span><span class="caret"></span></button>
        <div class="col">
          <button class="row" aria-label="矩形"><svg class="i32"><use href="#rect"/></svg><span class="caret"></span></button>
          <button class="row" aria-label="椭圆"><svg class="i32"><use href="#ellipse"/></svg><span class="caret"></span></button>
          <button class="row" aria-label="图案填充"><svg class="i32"><use href="#hatch"/></svg><span class="caret"></span></button>
        </div>
      </div>
      <footer><span>绘图</span><span class="caret lg"></span></footer>
    </section>

    <section class="panel p-modify">
      <div class="body">
        <div class="col">
          <button class="row"><svg class="i32"><use href="#move"/></svg><span>移动</span></button>
          <button class="row"><svg class="i32"><use href="#copy"/></svg><span>复制</span></button>
          <button class="row"><svg class="i32"><use href="#stretch"/></svg><span>拉伸</span></button>
        </div>
        <div class="col">
          <button class="row"><svg class="i32"><use href="#rotate"/></svg><span>旋转</span></button>
          <button class="row"><svg class="i32"><use href="#mirror"/></svg><span>镜像</span></button>
          <button class="row"><svg class="i32"><use href="#scale"/></svg><span>缩放</span></button>
        </div>
        <div class="col">
          <button class="row"><svg class="i32"><use href="#trim"/></svg><span>修剪</span><span class="caret"></span></button>
          <button class="row"><svg class="i32"><use href="#fillet"/></svg><span>圆角</span><span class="caret"></span></button>
          <button class="row"><svg class="i32"><use href="#array"/></svg><span>阵列</span><span class="caret"></span></button>
        </div>
        <div class="col">
          <button class="row" aria-label="删除"><svg class="i32"><use href="#erase"/></svg></button>
          <button class="row" aria-label="分解"><svg class="i32"><use href="#explode"/></svg></button>
          <button class="row" aria-label="偏移"><svg class="i32"><use href="#offset"/></svg></button>
        </div>
      </div>
      <footer><span>修改</span><span class="caret lg"></span></footer>
    </section>

    <section class="panel p-anno">
      <div class="body">
        <button class="big"><svg class="i64 lettera" viewBox="0 0 64 64"><text x="32" y="58" text-anchor="middle">A</text></svg><span>文字</span><span class="caret"></span></button>
        <button class="big"><svg class="i64"><use href="#dim"/></svg><span>标注</span></button>
        <div class="col">
          <button class="row"><svg class="i32"><use href="#lindim"/></svg><span>线性</span><span class="caret"></span></button>
          <button class="row"><svg class="i32"><use href="#leader"/></svg><span>引线</span><span class="caret"></span></button>
          <button class="row"><svg class="i32"><use href="#table"/></svg><span>表格</span></button>
        </div>
      </div>
      <footer><span>注释</span><span class="caret lg"></span></footer>
    </section>

    <section class="panel p-layer">
      <div class="body">
        <button class="big"><svg class="i64"><use href="#layerprop"/></svg><span>图层<br>特性</span></button>
        <div class="col">
          <div class="row"><div class="combo layers">
            <svg class="i32"><use href="#bulb"/></svg><svg class="i32"><use href="#sun"/></svg><svg class="i32"><use href="#unlock"/></svg><span class="swatch black"></span>
            <select aria-label="图层"><option>0</option></select><span class="caret lg"></span>
          </div></div>
          <div class="row icons">
            <button aria-label="关"><svg class="i32"><use href="#l-off"/></svg></button>
            <button aria-label="隔离"><svg class="i32"><use href="#l-iso"/></svg></button>
            <button aria-label="冻结"><svg class="i32"><use href="#l-freeze"/></svg></button>
            <button aria-label="锁定"><svg class="i32"><use href="#l-lock"/></svg></button>
            <button class="lab"><svg class="i32"><use href="#l-current"/></svg><span>置为当前</span></button>
          </div>
          <div class="row icons">
            <button aria-label="打开所有图层"><svg class="i32"><use href="#l-on"/></svg></button>
            <button aria-label="取消隔离"><svg class="i32"><use href="#l-uniso"/></svg></button>
            <button aria-label="解冻"><svg class="i32"><use href="#l-thaw"/></svg></button>
            <button aria-label="解锁"><svg class="i32"><use href="#l-unlock"/></svg></button>
            <button class="lab"><svg class="i32"><use href="#l-match"/></svg><span>匹配图层</span></button>
          </div>
        </div>
      </div>
      <footer><span>图层</span><span class="caret lg"></span></footer>
    </section>

    <section class="panel p-block">
      <div class="body">
        <button class="big"><svg class="i64"><use href="#insert"/></svg><span>插入</span></button>
        <div class="col">
          <button class="row"><svg class="i32"><use href="#create"/></svg><span>创建</span></button>
          <button class="row"><svg class="i32"><use href="#bedit"/></svg><span>编辑</span></button>
          <button class="row" aria-label="编辑属性"><svg class="i32"><use href="#attr"/></svg><span class="caret"></span></button>
        </div>
      </div>
      <footer><span>块</span><span class="caret lg"></span></footer>
    </section>

    <section class="panel p-prop">
      <div class="body">
        <button class="big"><svg class="i64"><use href="#matchprop"/></svg><span>特性<br>匹配</span></button>
        <div class="col">
          <div class="row"><svg class="i32"><use href="#wheel"/></svg><div class="combo"><span class="swatch"></span><select aria-label="颜色"><option>ByLayer</option></select><span class="caret lg"></span></div></div>
          <div class="row"><svg class="i32"><use href="#lweight"/></svg><div class="combo lines"><span class="rule"></span><select aria-label="线宽"><option>ByLayer</option></select><span class="caret lg"></span></div></div>
          <div class="row"><svg class="i32"><use href="#ltype"/></svg><div class="combo lines"><span class="rule"></span><select aria-label="线型"><option>ByLayer</option></select><span class="caret lg"></span></div></div>
        </div>
      </div>
      <footer class="withlaunch"><i></i><div><span>特性</span><span class="caret lg"></span></div><svg width="12" height="12"><use href="#launch"/></svg></footer>
    </section>

    <section class="panel p-group">
      <div class="body">
        <button class="big"><svg class="i64"><use href="#group"/></svg><span>组</span></button>
        <div class="col">
          <button class="row" aria-label="解除编组"><svg class="i32"><use href="#groupedit"/></svg></button>
          <button class="row" aria-label="组编辑"><svg class="i32"><use href="#grouppm"/></svg></button>
          <button class="row sel" aria-label="启用组选择"><svg class="i32"><use href="#groupsel"/></svg></button>
        </div>
      </div>
      <footer><span>组</span><span class="caret lg"></span></footer>
    </section>

    <section class="panel p-util">
      <div class="body">
        <button class="big"><svg class="i64"><use href="#measure"/></svg><span>测量</span><span class="caret"></span></button>
        <div class="col">
          <button class="row" aria-label="快速选择"><svg class="i32"><use href="#qcalc"/></svg></button>
          <button class="row" aria-label="点坐标"><svg class="i32"><use href="#idpoint"/></svg></button>
          <button class="row" aria-label="计算器"><svg class="i32"><use href="#calc"/></svg></button>
        </div>
      </div>
      <footer><span>实用工具</span><span class="caret lg"></span></footer>
    </section>

    <section class="panel p-clip">
      <div class="body">
        <button class="big"><svg class="i64"><use href="#paste"/></svg><span>粘贴</span><span class="caret"></span></button>
        <div class="col">
          <button class="row" aria-label="剪切"><svg class="i32"><use href="#cut"/></svg></button>
          <button class="row" aria-label="复制裁剪"><svg class="i32"><use href="#copyclip"/></svg></button>
        </div>
      </div>
      <footer><span>剪贴板</span></footer>
    </section>

    <section class="panel p-view">
      <div class="body"><button class="big"><svg class="i64"><use href="#base"/></svg><span>基点</span><span class="caret"></span></button></div>
      <footer><span>视图</span><span class="caret lg"></span><svg width="12" height="12"><use href="#launch"/></svg></footer>
    </section>

    <section class="panel p-touch">
      <div class="body"><button class="big"><svg class="i64"><use href="#touch"/></svg><span>选择<br>模式</span></button></div>
      <footer><span>触摸</span></footer>
    </section>
  </div>

  <div class="filetabs">
    <button class="ftab start">开始</button>
    <button class="ftab doc"><span>Drawing1*</span><svg width="16" height="16" viewBox="0 0 16 16"><path d="M2 2L14 14M14 2L2 14" stroke="#4c4c4c" stroke-width="4"/></svg></button>
    <button class="fadd" aria-label="新图形"><svg width="16" height="16" viewBox="0 0 16 16"><path d="M8 0V16M0 8H16" stroke="#c6c6c6" stroke-width="4"/></svg></button>
  </div>

  <main class="work">
    <div class="canvas">
      <svg class="gridlines" aria-hidden="true">
        <defs>
          <g id="v"><path d="M36 8V4000M71 8V4000M107 8V4000M142 8V4000" stroke="#262e39"/><path d="M0 8V4000" stroke="#2c3445" stroke-width="2"/></g>
          <g id="h"><path d="M0 36H4000M0 71H4000M0 107H4000M0 142H4000" stroke="#262e39"/><path d="M0 0H4000" stroke="#2c3445" stroke-width="2"/></g>
        </defs>
        <use href="#h" y="8"/><use href="#h" y="186"/><use href="#h" y="363"/><use href="#h" y="541"/><use href="#h" y="718"/><use href="#h" y="895"/><use href="#h" y="1073"/><use href="#h" y="1250"/>
        <use href="#v" x="-88"/><use href="#v" x="89"/><use href="#v" x="267"/><use href="#v" x="444"/><use href="#v" x="622"/><use href="#v" x="799"/><use href="#v" x="977"/><use href="#v" x="1154"/><use href="#v" x="1331"/><use href="#v" x="1509"/><use href="#v" x="1686"/><use href="#v" x="1863"/><use href="#v" x="2041"/><use href="#v" x="2218"/><use href="#v" x="2396"/><use href="#v" x="2573"/><use href="#v" x="2751"/><use href="#v" x="2928"/>
        <path d="M89 0V4000" stroke="#1f6325"/>
      </svg>
      <div class="vplabel">[-][俯视][二维线框]</div>
      <svg class="ucs" width="90" height="84" viewBox="0 0 90 84"><path d="M9 20V70H60M4 65H14V75H4Z" fill="none" stroke="#f2f2f2" stroke-width="2"/><text x="11" y="16">Y</text><text x="64" y="69">X</text></svg>

      <div class="cube">
        <svg width="120" height="120" viewBox="0 0 120 120"><circle cx="60" cy="60" r="53" fill="none" stroke="#444a52" stroke-width="13"/></svg>
        <span class="n">北</span><span class="w">西</span><span class="e">东</span><span class="s">南</span>
        <button class="face"><span>上</span></button>
      </div>
      <button class="wcs">WCS<svg width="10" height="6" viewBox="0 0 10 6"><path d="M1 1H9L5 5Z" fill="none" stroke="#dcdce4"/></svg></button>

      <svg class="navbar" width="32" height="212" viewBox="0 0 32 212" fill="none" stroke="#43494f">
        <rect x="0" y="0" width="32" height="212" rx="4" fill="#5a6063" stroke="#6c7275"/>
        <circle cx="26" cy="5" r="4" fill="#484e52"/><path d="M24 3L28 7M28 3L24 7" stroke="#6c7275"/>
        <path d="M5 30C5 24 9 19 16 19H27V30C27 37 22 41 16 41S5 36 5 30Z" /><circle cx="16" cy="30" r="6"/><path d="M8 38L12 35M24 38L20 35"/>
        <path d="M13 49H19L16 53Z" fill="#3a4045"/><path d="M3 57H29" stroke="#6c7275"/>
        <path d="M11 84L4 74C4 71 7 71 10 75L8 64C9 61 11 62 12 65L13 71V62C14 60 17 60 17 62V71L19 63C20 61 23 62 22 65L21 73L24 68C26 66 28 68 26 71L22 82L20 84Z"/>
        <path d="M4 90L20 105M20 90L4 105M4 95V90H9M15 90H20V95M4 100V105H9"/><circle cx="21" cy="105" r="5"/><path d="M25 108L30 112" stroke-width="3"/>
        <path d="M13 119H19L16 123Z" fill="#3a4045"/>
        <path d="M13 149V133H10L15 127L20 133H17V149Z"/><ellipse cx="16" cy="140" rx="12" ry="5"/><path d="M12 139V148L6 143Z" fill="#3a4045"/>
        <path d="M13 157H19L16 161Z" fill="#3a4045"/><path d="M3 164H29" stroke="#6c7275"/>
        <path d="M4 170H9V175H4ZM12 170H18V175H12ZM21 170H27V175H21ZM4 179H20V192H4Z"/><path d="M9 181L16 185L9 189Z" fill="#3a4045"/>
        <circle cx="26" cy="206" r="4" fill="#484e52"/><path d="M24 206H28" stroke="#6c7275"/>
      </svg>

      <div class="command">
        <div class="handle">
          <span class="grip"></span>
          <button aria-label="关闭命令行"><svg width="20" height="18" viewBox="0 0 20 18"><path d="M3 1L17 17M17 1L3 17" stroke="#d4d4d4" stroke-width="4"/></svg></button>
          <button aria-label="自定义命令行"><svg width="28" height="32"><use href="#wrench"/></svg></button>
        </div>
        <div class="line">
          <button class="promptbtn" aria-label="最近使用的命令"><svg width="30" height="28"><use href="#prompt"/></svg><span class="caret grey"></span></button>
          <input type="text" placeholder="键入命令" aria-label="命令">
          <span class="caret up"></span>
        </div>
      </div>
    </div>
    <div class="scrollstrip"></div>
  </main>

  <footer class="status">
    <div class="layouts">
      <button class="ltab on">模型</button><button class="ltab">布局1</button><button class="ltab">布局2</button>
      <button class="ladd" aria-label="新建布局"><svg width="16" height="16" viewBox="0 0 16 16"><path d="M8 0V16M0 8H16" stroke="#c6c6c6" stroke-width="4"/></svg></button>
    </div>
    <div class="tray">
      <div class="cell model"><button>模型</button></div>
      <div class="cell"><button aria-label="栅格"><svg class="i32"><use href="#grid"/></svg></button><button class="drop" aria-label="捕捉"><svg class="i32"><use href="#snap"/></svg><span class="caret lg"></span></button></div>
      <div class="cell"><button aria-label="正交"><svg class="i32"><use href="#ortho"/></svg></button><button class="drop" aria-label="极轴"><svg class="i32"><use href="#polar"/></svg><span class="caret lg"></span></button><button class="drop" aria-label="等轴测"><svg width="32" height="40"><use href="#iso"/></svg><span class="caret lg"></span></button></div>
      <div class="cell join"><button aria-label="对象捕捉追踪"><svg class="i32"><use href="#track"/></svg></button><button class="drop" aria-label="对象捕捉"><svg class="i32"><use href="#osnap"/></svg><span class="caret lg"></span></button></div>
      <div class="cell"><button aria-label="注释可见性"><svg class="i32"><use href="#annov"/></svg></button><button aria-label="自动缩放"><svg class="i32"><use href="#annoa"/></svg></button><button aria-label="注释比例"><svg class="i32"><use href="#anno"/></svg></button><button class="ratio">1:1<span class="caret lg"></span></button></div>
      <div class="cell"><button class="drop" aria-label="切换工作空间"><svg class="i32"><use href="#gear"/></svg><span class="caret lg"></span></button></div>
      <div class="cell join"><button aria-label="注释监视器"><svg class="i32"><use href="#plus"/></svg></button></div>
      <div class="cell"><button aria-label="隔离对象"><svg class="i32"><use href="#shapes"/></svg></button></div>
      <div class="cell"><button aria-label="硬件加速"><svg class="i32"><use href="#hw"/></svg></button></div>
      <div class="cell last"><button aria-label="全屏显示"><svg class="i32"><use href="#full"/></svg></button><button aria-label="自定义"><svg class="i32"><use href="#menu"/></svg></button></div>
    </div>
  </footer>

  <div class="mark mark-menu"><span>菜单区域</span></div>
  <div class="mark mark-draw"><span>绘图区域</span></div>
  <div class="mark mark-cmd"><span>绘图命令区域</span></div>
  <div class="credit">CSDN @hkjghgkj</div>
</div>
</body>
</html>
```

FILE: styles.css
```css
* { box-sizing: border-box; }

body {
  margin: 0;
  background: #212830;
  color: #fff;
  font: 24px/30px "Noto Sans", "Noto Sans CJK SC", sans-serif;
}

button, input, select {
  margin: 0;
  padding: 0;
  border: 0;
  border-radius: 0;
  background: none;
  color: inherit;
  font: inherit;
}

button { display: flex; align-items: center; white-space: nowrap; }
svg { display: block; flex: none; }

.sprite { position: absolute; }
.i32 { width: 32px; height: 32px; }
.i64 { width: 64px; height: 64px; }

.caret {
  flex: none;
  width: 10px;
  height: 6px;
  background: #fff;
  clip-path: polygon(0 0, 100% 0, 50% 100%);
}
.caret.lg { width: 16px; height: 8px; }
.caret.dark { width: 8px; background: #2e3440; }
.caret.grey { background: #5e6064; }
.caret.up { width: 16px; height: 8px; background: #222; clip-path: polygon(0 100%, 100% 100%, 50% 0); }

.app {
  position: relative;
  display: flex;
  flex-direction: column;
  min-height: 100vh;
  overflow: hidden;
}

/* title bar */
.titlebar { display: flex; height: 44px; background: #fff; }

.appbtn {
  align-self: flex-start;
  width: 37px;
  height: 37px;
  border: solid #1c1c1c;
  border-width: 0 2px 2px 0;
  background: linear-gradient(#b5b5b5, #6e6e6e);
}

.qat {
  display: flex;
  align-items: center;
  gap: 16px;
  padding: 0 8px 4px 18px;
  border-right: 2px solid #8a8a8a;
  background: #a4a4a4;
}
.split { gap: 14px; }
.customize { flex-direction: column; gap: 4px; }
.customize .bar { width: 16px; height: 2px; background: #fff; }

.title {
  flex: 1;
  display: flex;
  justify-content: center;
  align-items: center;
  gap: 28px;
  margin: 0;
  padding-bottom: 4px;
  color: #000;
  font-size: 25px;
  font-weight: 400;
}

.infocenter {
  display: flex;
  align-items: center;
  padding: 0 8px 4px;
  border: solid #8a8a8a;
  border-width: 0 2px;
  background: #a4a4a4;
}
.tri-right { width: 8px; height: 16px; background: #fff; clip-path: polygon(0 0, 100% 50%, 0 100%); }
.search {
  width: 360px;
  height: 42px;
  margin: 0 8px 0 10px;
  padding: 0 6px;
  border: 2px solid #333;
  border-top: 0;
  background: #757575;
  font-size: 22px;
  font-style: italic;
}
.search::placeholder { color: #c4c4c4; }
.login { gap: 10px; margin: 0 18px 0 16px; }
.login .caret { margin-left: 112px; }
.pair { gap: 10px; margin-left: 16px; }
.helpbtn { gap: 14px; margin-left: 20px; padding-left: 18px; border-left: 1px solid #b4b4b4; }

.winctl { display: flex; justify-content: space-between; align-items: center; width: 322px; padding: 0 33px 0 73px; }

/* classic menus */
.menubar {
  display: flex;
  align-items: center;
  gap: 37px;
  height: 44px;
  padding-left: 56px;
  border-top: 1px solid #333;
  border-bottom: 2px solid #2f2f2f;
  background: linear-gradient(#adadad, #555);
}
.docctl { margin-left: auto; }

/* ribbon tabs */
.tabs {
  display: flex;
  height: 40px;
  padding: 4px 0 0 2px;
  background: linear-gradient(#525252 38px, #2d2d2d 38px);
  color: #d6d6d6;
}
.tabs button { padding: 0 20px 4px; }
.tabs .on { border: 2px solid #2d2d2d; border-bottom: 0; padding: 0 18px 4px; background: linear-gradient(#686868, #5d5d5d); color: #fff; }
.tabs .minimize { gap: 10px; margin-left: 46px; padding: 0 0 6px; }

/* ribbon panels */
.ribbon {
  display: flex;
  height: 198px;
  border-bottom: 2px solid #858585;
  background: linear-gradient(#575757, #393939);
  box-shadow: inset 0 -3px #2b2b2b;
}
.panel { display: flex; flex: none; flex-direction: column; height: 193px; border-right: 2px solid #3c3c3c; box-shadow: inset 2px 0 #666; background: #5d5d5d; }
.body { display: flex; height: 158px; }
.panel footer {
  display: flex;
  flex: 1;
  justify-content: center;
  align-items: center;
  gap: 13px;
  margin: 0 2px;
  padding-top: 3px;
  border-bottom: 2px solid #5b5b5b;
  background: linear-gradient(#545454, #484848);
}
.big { flex-direction: column; width: 76px; padding-top: 12px; text-align: center; }
.big span { margin-top: 10px; }
.big .caret { margin-top: 4px; }
.col { display: flex; flex-direction: column; padding-top: 8px; }
.row { display: flex; align-items: center; gap: 10px; height: 48px; }
.big + .col { margin-left: 10px; }

.p-draw { width: 420px; }
.p-draw .body { padding-left: 4px; }
.p-draw .big:nth-child(2) { width: 84px; }
.p-draw .big:nth-child(4) { width: 92px; }
.p-draw .row { gap: 14px; }

.p-modify { width: 453px; }
.p-modify .body { gap: 28px; padding-left: 14px; }
.p-modify .row .caret { margin-left: 12px; }

.p-anno { width: 312px; }
.p-anno .body { padding-left: 7px; }
.p-anno .big { width: 84px; }
.p-anno .big + .col { margin-left: 7px; }
.p-anno .row .caret { margin-left: 6px; }
.lettera { overflow: visible; fill: #dcdcdc; font: 76px "Liberation Sans", sans-serif; }

.p-layer { width: 504px; }
.p-layer .body { padding-left: 4px; }
.p-layer .big + .col { flex: 1; margin: 0 4px 0 1px; }
.icons { gap: 16px; padding-left: 9px; }
.lab { gap: 10px; }

.combo {
  display: flex;
  flex: 1;
  align-items: center;
  height: 44px;
  padding-right: 3px;
  border: 2px solid #333;
  background: linear-gradient(#727272, #4c4c4c);
}
.combo select { flex: 1; min-width: 0; height: 34px; appearance: none; }
.combo.layers { gap: 7px; padding-left: 6px; }
.combo.layers select { padding-left: 3px; }
.swatch { width: 32px; height: 32px; border: 2px solid #b8b8b8; background: #fff; }
.swatch.black { width: 28px; height: 28px; border-color: #000; }
.combo > .swatch:first-child { margin: 0 20px 0 25px; }
.rule { width: 118px; height: 3px; margin: 0 5px 0 16px; background: #d6d6d6; }

.p-block { width: 196px; }
.p-block .body { padding-left: 4px; }

.p-prop { width: 402px; }
.p-prop .body { padding-left: 3px; }
.p-prop .big + .col { flex: 1; margin: 0 4px 0 6px; }
.p-prop .row { gap: 4px; }
.p-prop .row + .row .combo { margin-bottom: 3px; }
.panel .withlaunch { justify-content: space-between; padding-right: 8px; }
.withlaunch div { display: flex; align-items: center; gap: 13px; }

.p-group { width: 136px; }
.p-group .body { padding-left: 3px; }
.p-group .big + .col { margin-left: 3px; }
.p-group .row { justify-content: center; width: 48px; }
.p-group .sel { height: 44px; margin-top: 1px; border: 2px solid #2b3a5e; background: linear-gradient(#86a8dc, #5274ad); }

.p-util, .p-clip { width: 152px; }
.p-util .body, .p-clip .body { padding-left: 11px; }
.p-util .big + .col, .p-clip .big + .col { margin-left: 18px; }

.p-view { width: 122px; }
.p-view .body, .p-touch .body { justify-content: center; }
.p-view footer { gap: 12px; }
.p-touch { width: 86px; }
.p-touch footer { border-bottom: 4px solid #1f5f8f; background: linear-gradient(#4a4a4a, #2a2e33); }

/* drawing file tabs */
.filetabs {
  display: flex;
  height: 52px;
  padding: 7px 0 0 20px;
  border-bottom: 3px solid #606060;
  background: #383838;
}
.ftab { height: 42px; padding-top: 3px; }
.start { width: 276px; padding-left: 40px; background: linear-gradient(#5c5c5c, #4a4a4a); color: #b4b4b4; clip-path: path("M0 42C20 40 16 0 34 0H250C268 0 262 40 276 42Z"); }
.doc { justify-content: space-between; width: 280px; margin-left: -26px; padding-right: 42px; padding-left: 36px; background: linear-gradient(#8c8c8c, #5f5f5f); clip-path: path("M0 42C20 40 14 0 32 0H246C266 0 258 40 280 42Z"); }
.fadd { justify-content: center; width: 44px; height: 30px; margin: 7px 0 0 -4px; border: 2px solid #6a6a6a; border-radius: 2px 22px 2px 18px; background: #4c4c4c; }

/* drawing area */
.work { display: flex; flex: 1; }
.canvas { position: relative; flex: 1; background: #212830; }
.scrollstrip { width: 20px; margin-top: 4px; border-left: 12px solid #d9e6f3; background: #000; }
.gridlines { position: absolute; inset: 0 0 79px 0; width: 100%; height: calc(100% - 79px); }
.vplabel { position: absolute; left: 0; top: 8px; font-size: 13px; line-height: 18px; }
.ucs { position: absolute; left: 80px; bottom: 46px; }
.ucs text { fill: #e8e8e8; font: 17px "Liberation Sans", sans-serif; }

.cube { position: absolute; top: 26px; right: 23px; color: #b9bbbd; font-size: 18px; line-height: 20px; }
.cube > span { position: absolute; }
.cube .n { left: 51px; top: -6px; }
.cube .s { left: 51px; bottom: -8px; }
.cube .w { left: -6px; top: 50px; }
.cube .e { right: -6px; top: 50px; }
.face { position: absolute; left: 34px; top: 34px; width: 52px; height: 52px; justify-content: center; border: 1px solid #7b7d80; background: #adadb0; }
.face span { width: 32px; height: 32px; background: #9ca5ab; color: #50575e; font: 28px/30px "Noto Serif CJK SC", "Noto Sans CJK SC", serif; }

.wcs { position: absolute; top: 173px; right: 59px; gap: 6px; width: 48px; height: 18px; padding-left: 4px; border: 1px solid #b4b4c0; border-radius: 4px; background: #9a9ca9; color: #3c3f48; font: 11px/16px "Liberation Sans", sans-serif; }
.navbar { position: absolute; top: 216px; right: 4px; }

/* floating command line */
.command { position: absolute; left: 689px; right: 669px; bottom: 0; display: flex; align-items: flex-end; height: 67px; }
.handle { display: flex; align-items: center; width: 108px; height: 54px; padding-left: 6px; border: 2px solid #5f5f5f; border-radius: 4px 0 0 4px; background: linear-gradient(#6a6a6a, #383838); }
.handle button { margin-left: 12px; }
.handle button:last-child { margin-left: 20px; }
.grip { width: 10px; height: 36px; background: repeating-linear-gradient(#0000 0 3px, #555 3px 6px), linear-gradient(90deg, #a8a8a8 4px, #0000 4px 6px, #a8a8a8 6px); }
.line { display: flex; flex: 1; align-items: center; height: 67px; padding: 0 7px 4px 8px; border: 2px solid #5b5b5b; border-top-color: #bdbec0; border-radius: 4px; background: #bdbec0; }
.promptbtn { gap: 7px; }
.line input { flex: 1; min-width: 0; height: 60px; padding-left: 18px; color: #333; font-size: 51px; line-height: 58px; font-style: italic; }
.line input::placeholder { color: #77787a; }

/* status bar */
.status { display: flex; justify-content: space-between; height: 54px; border-top: 2px solid #606060; background: #383838; }
.layouts { display: flex; padding-left: 8px; color: #b9b9b9; }
.ltab { justify-content: center; width: 118px; height: 34px; margin-right: -10px; background: linear-gradient(#4e4e4e, #626262); clip-path: path("M0 0C18 2 12 34 24 34H94C108 34 100 2 118 0Z"); }
.ltab.on { margin-right: -18px; background: linear-gradient(#5e5e5e, #8e8e8e); color: #fff; font-weight: 700; z-index: 1; }
.ladd { justify-content: center; width: 46px; height: 32px; margin: 1px 0 0 14px; border: 2px solid #6a6a6a; border-radius: 22px 2px 20px 2px; background: #4c4c4c; }

.tray { display: flex; gap: 2px; padding-left: 2px; background: #666; }
.cell { display: flex; gap: 15px; align-items: center; padding: 0 7px; border: solid #858585; border-width: 2px 2px 0; background: #535353; }
.cell.join { margin-left: -3px; }
.cell.model { padding: 0 2px 0 7px; }
.drop { gap: 15px; }
.ratio { gap: 8px; }
.cell.last { gap: 17px; padding-right: 12px; border-right: 0; }

/* callout frames */
.mark { position: absolute; border: 7px solid #fc3838; color: #fc3838; font: 53px/60px "Noto Sans CJK SC", sans-serif; pointer-events: none; }
.mark span { position: absolute; white-space: nowrap; }
.mark-menu { left: 6px; right: 59px; top: 42px; height: 291px; }
.mark-menu span { right: 38px; top: 39px; }
.mark-draw { left: 13px; right: 55px; top: 378px; bottom: 121px; }
.mark-draw span { right: 49px; top: 277px; }
.mark-cmd { left: 783px; right: 46px; bottom: 0; height: 118px; border-bottom-width: 5px; }
.mark-cmd span { left: 664px; top: 1px; }

.credit { position: absolute; right: 15px; bottom: 6px; color: #e2e2e2; font: 19px/30px Roboto, sans-serif; text-shadow: 1px 1px 2px #000; }
```
